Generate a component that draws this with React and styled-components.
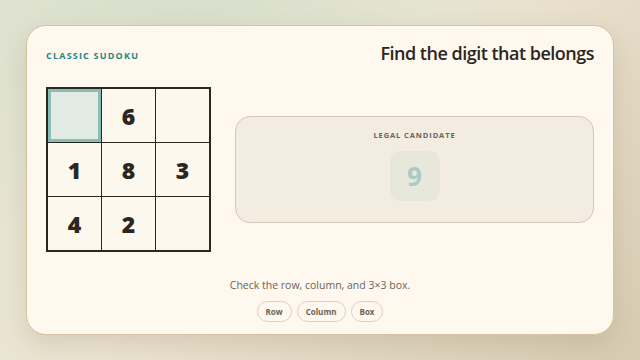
import React from "react";
import styled, { createGlobalStyle } from "styled-components";

const GlobalStyle = createGlobalStyle`
  html, body {
    margin: 0;
    padding: 0;
  }
  body {
    width: 640px;
    height: 360px;
    overflow: hidden;
    font-family: "Open Sans", "Noto Sans", sans-serif;
    background:
      radial-gradient(ellipse at 30% 0%, #d8dfcc 0%, rgba(216, 223, 204, 0) 55%),
      linear-gradient(135deg, #e3e4d2 0%, #ece5d3 45%, #d7cbb2 100%);
  }
`;

const Page = styled.div`
  width: 640px;
  height: 360px;
  padding: 25px 26px 26px 26px;
  box-sizing: border-box;
`;

const Card = styled.div`
  height: 310px;
  box-sizing: border-box;
  background: #fff8ef;
  border: 1px solid #d6c29f;
  border-radius: 20px;
  box-shadow: 0 10px 24px rgba(120, 100, 60, 0.18);
  padding: 14px 19px 12px 19px;
  display: flex;
  flex-direction: column;
`;

const Header = styled.div`
  display: flex;
  justify-content: space-between;
  align-items: center;
  height: 26px;
`;

const Eyebrow = styled.div`
  font-size: 9px;
  font-weight: 700;
  letter-spacing: 1.2px;
  color: #23877f;
  padding-top: 4px;
`;

const Title = styled.h1`
  margin: 0;
  font-size: 18px;
  font-weight: 600;
  color: #2c2620;
  letter-spacing: -0.5px;
`;

const Main = styled.div`
  display: flex;
  align-items: center;
  gap: 24px;
  margin-top: 21px;
`;

const Grid = styled.div`
  display: grid;
  grid-template-columns: repeat(3, 1fr);
  width: 165px;
  height: 165px;
  box-sizing: border-box;
  border: 2px solid #2c2620;
  background: #2c2620;
  gap: 1px;
  flex-shrink: 0;
`;

const Cell = styled.div`
  display: flex;
  align-items: center;
  justify-content: center;
  background: ${(p) => (p.$selected ? "#e1ebe3" : "#fcf8ee")};
  box-shadow: ${(p) => (p.$selected ? "inset 0 0 0 3px #88bdb5" : "none")};
  font-size: 23px;
  font-weight: 800;
  color: #2c2620;
`;

const Panel = styled.div`
  flex: 1;
  height: 107px;
  box-sizing: border-box;
  background: #f3ece1;
  border: 1px solid #d3c7b6;
  border-radius: 15px;
  display: flex;
  flex-direction: column;
  align-items: center;
  padding-top: 13px;
`;

const PanelLabel = styled.div`
  font-size: 7.5px;
  font-weight: 700;
  letter-spacing: 0.9px;
  color: #6b6357;
`;

const Tile = styled.div`
  margin-top: 11px;
  width: 50px;
  height: 50px;
  border-radius: 11px;
  background: #e8e7dc;
  display: flex;
  align-items: center;
  justify-content: center;
  font-size: 26px;
  font-weight: 700;
  color: #a6ccc3;
`;

const Footer = styled.div`
  margin-top: auto;
  display: flex;
  flex-direction: column;
  align-items: center;
  gap: 9px;
`;

const Hint = styled.div`
  font-size: 10.5px;
  color: #6b6357;
`;

const Chips = styled.div`
  display: flex;
  gap: 5px;
`;

const Chip = styled.button`
  font-family: inherit;
  height: 21px;
  padding: 0 8px;
  border-radius: 11px;
  border: 1px solid #dccfc0;
  background: #fff8ef;
  font-size: 8px;
  font-weight: 700;
  color: #6b6357;
  cursor: pointer;
`;

const cells = ["", "6", "", "1", "8", "3", "4", "2", ""];

export default function App() {
  return (
    <>
      <GlobalStyle />
      <Page>
        <Card>
          <Header>
            <Eyebrow>CLASSIC SUDOKU</Eyebrow>
            <Title>Find the digit that belongs</Title>
          </Header>
          <Main>
            <Grid>
              {cells.map((v, i) => (
                <Cell key={i} $selected={i === 0}>
                  {v}
                </Cell>
              ))}
            </Grid>
            <Panel>
              <PanelLabel>LEGAL CANDIDATE</PanelLabel>
              <Tile>9</Tile>
            </Panel>
          </Main>
          <Footer>
            <Hint>Check the row, column, and 3×3 box.</Hint>
            <Chips>
              <Chip>Row</Chip>
              <Chip>Column</Chip>
              <Chip>Box</Chip>
            </Chips>
          </Footer>
        </Card>
      </Page>
    </>
  );
}
